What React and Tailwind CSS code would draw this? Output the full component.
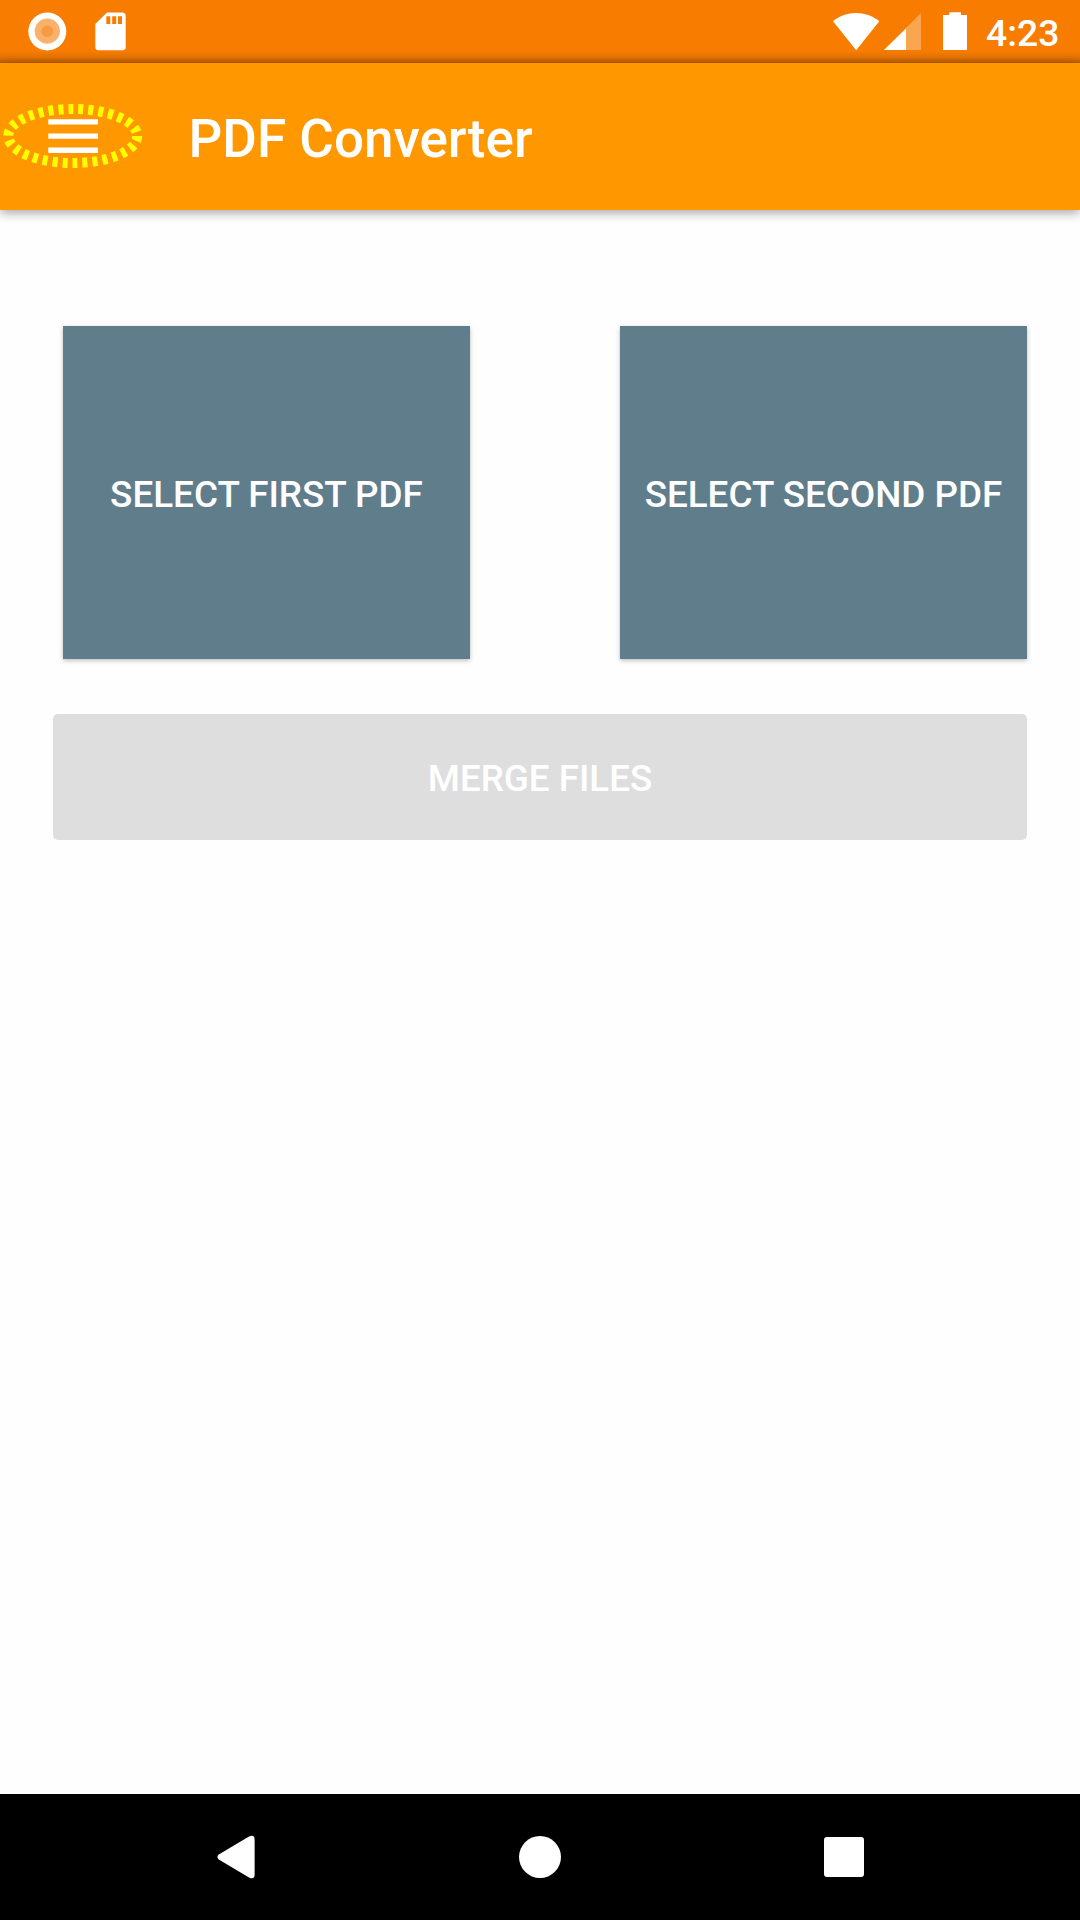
const cardShadow = "shadow-[0_2px_4px_rgba(0,0,0,0.16),0_1px_6px_rgba(0,0,0,0.10)]";

function StatusBar() {
  return (
    <div className="flex h-[63px] shrink-0 items-start bg-[#f77c00] bg-[linear-gradient(to_bottom,transparent_51px,rgba(0,0,0,0.07)_57px,rgba(0,0,0,0.24)_63px)]">
      <svg className="h-[63px] w-[140px]" viewBox="0 0 140 63">
        <circle cx="47.3" cy="31.5" r="19" fill="#fff" />
        <circle cx="47.3" cy="31.2" r="12.6" fill="#fab26b" />
        <circle cx="47.3" cy="31.2" r="5.8" fill="#f89a41" />
        <path fill="#fff" fillRule="evenodd" d="M107 12.5H122.500Q125.700 12.500 125.700 16V47Q125.700 50.300 122.500 50.300H99Q95.300 50.300 95.300 47V24ZM106.300 16.300V24H110.300V16.300ZM112.200 16.300V24H116.200V16.300ZM118 16.300V24H122V16.300Z" />
      </svg>
      <div className="grow" />
      <svg className="h-[63px] w-[150px]" viewBox="820 0 150 63">
        <path fill="#fff" d="M833 21.300C846 10.300 866 10.300 879.300 21.300L856.200 50.300Z" />
        <path fill="#faa54f" d="M921 13V50H884Z" />
        <path fill="#fff" d="M906 28.500V50H884Z" />
        <path fill="#fff" d="M949.300 12.200H961V15H967V50H943V15H949.300Z" />
      </svg>
      <div className="w-[110px] pl-[16px] pt-[10.500px] text-[37.3px] leading-[44px] font-medium text-white">4:23</div>
    </div>
  );
}

function AppBar() {
  return (
    <header className="flex h-[147px] shrink-0 items-center bg-[#ff9800] shadow-[0_3px_10px_rgba(0,0,0,0.35)]">
      <svg className="h-[147px] w-[147px]" viewBox="0 63 147 147">
        <path fill="#fff" d="M48.300 119.200H98V124.500H48.300ZM48.300 133.400H98V138.700H48.300ZM48.300 147.600H98V152.900H48.300Z" />
        <ellipse cx="72.700" cy="136" rx="64.500" ry="27" fill="none" stroke="#ff0" strokeWidth="10" strokeDasharray="5 5" />
      </svg>
      <h1 className="ml-[41.500px] mt-[4px] text-[53px] leading-[62px] font-medium text-white">PDF Converter</h1>
    </header>
  );
}

function NavBar() {
  return (
    <nav className="flex h-[126px] shrink-0 items-center justify-around bg-black px-[84px]">
      <svg className="size-[80px]" viewBox="0 0 80 80">
        <path fill="#fff" d="M22.800 37.500L53 19.600Q58.600 17 58.600 22.500V57.500Q58.600 63 53 60.400L22.800 42.500Q20 40 22.800 37.500Z" />
      </svg>
      <svg className="size-[80px]" viewBox="0 0 80 80">
        <circle cx="40" cy="40" r="21" fill="#fff" />
      </svg>
      <svg className="size-[80px]" viewBox="0 0 80 80">
        <rect x="20" y="20" width="40" height="40" rx="3" fill="#fff" />
      </svg>
    </nav>
  );
}

export default function App() {
  return (
    <div className="flex h-[1920px] w-[1080px] flex-col overflow-hidden bg-[#fefefe] font-['Roboto',sans-serif]">
      <StatusBar />
      <AppBar />
      <main className="flex grow flex-col pr-[53px] pl-[53px] pt-[116px]">
        <div className="flex justify-between pl-[10px]">
          <button className={`h-[333px] w-[407px] bg-[#607d8b] pt-[4px] text-[36.850px] font-medium text-white ${cardShadow}`}>SELECT FIRST PDF</button>
          <button className={`h-[333px] w-[407px] bg-[#607d8b] pt-[4px] text-[36.850px] font-medium text-white ${cardShadow}`}>SELECT SECOND PDF</button>
        </div>
        <button className="mt-[55px] h-[126px] rounded-[5px] bg-[#dedede] pt-[3px] text-[36.750px] font-medium text-white">MERGE FILES</button>
      </main>
      <NavBar />
    </div>
  );
}
